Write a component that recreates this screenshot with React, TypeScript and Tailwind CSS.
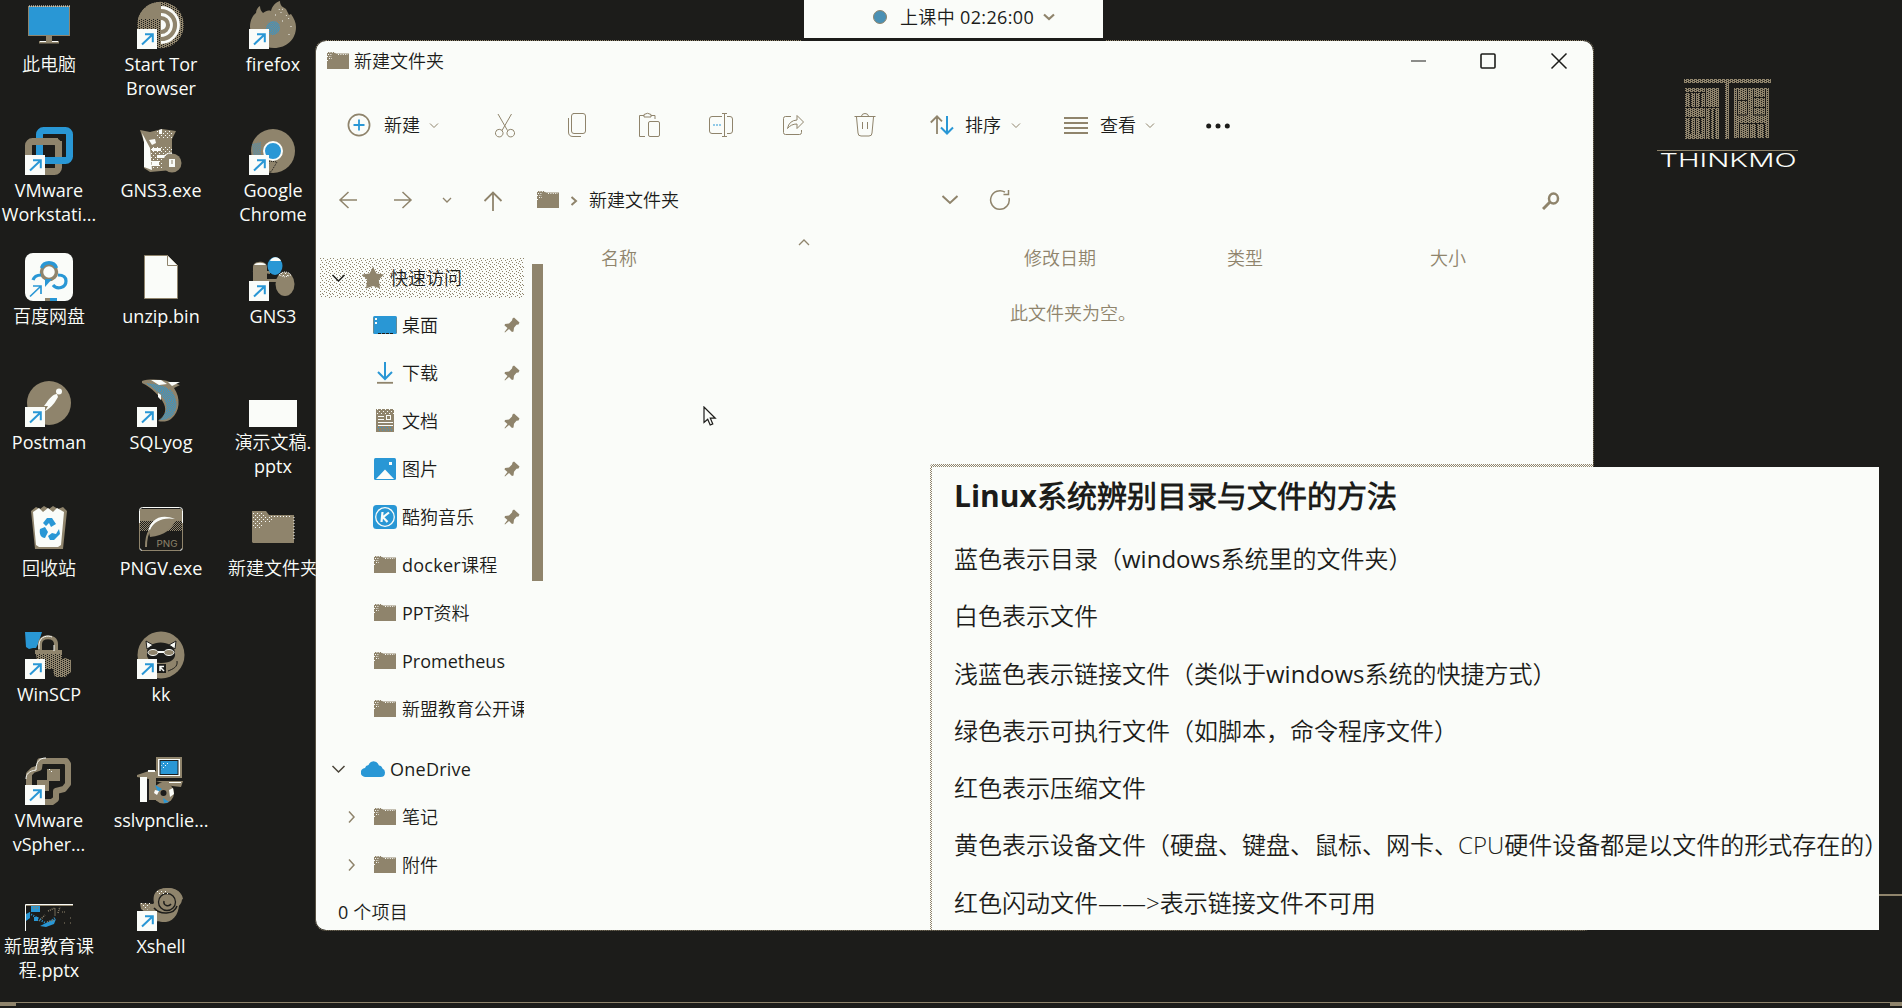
import React from "react";

const TAN = "#8f846c";
const BLUE = "#2997d5";
const WHITE = "#fafcf9";
const DARK = "#1c1c1a";

type Kids = { children?: React.ReactNode };

/* ---------- shared drawings ---------- */

function Defs() {
  return (
    <svg width="0" height="0" className="absolute">
      <defs>
        <pattern id="half" width="2" height="2" patternUnits="userSpaceOnUse">
          <rect width="1" height="1" fill={TAN} />
          <rect x="1" y="1" width="1" height="1" fill={TAN} />
        </pattern>
        <pattern id="most" width="4" height="2" patternUnits="userSpaceOnUse">
          <rect width="4" height="2" fill={TAN} />
          <rect x="0" y="0" width="1" height="1" fill={DARK} />
          <rect x="2" y="1" width="1" height="1" fill={DARK} />
        </pattern>
        <pattern id="lightdots" width="4" height="4" patternUnits="userSpaceOnUse">
          <rect x="0" y="0" width="1" height="1" fill={WHITE} />
          <rect x="2" y="2" width="1" height="1" fill={WHITE} />
        </pattern>
        <pattern id="bluedots" width="2" height="2" patternUnits="userSpaceOnUse">
          <rect x="0" y="0" width="1" height="1" fill={BLUE} />
          <rect x="1" y="1" width="1" height="1" fill={BLUE} />
        </pattern>
        <pattern id="sparse" width="10" height="9" patternUnits="userSpaceOnUse">
          {[[0, 0], [3, 0], [7, 1], [1, 2], [5, 2], [9, 3], [2, 4], [6, 4], [0, 6], [8, 5], [4, 6], [6, 7], [9, 8], [2, 8]].map(
            ([x, y]) => (
              <rect key={`${x}-${y}`} x={x} y={y} width="1" height="1" fill={TAN} />
            )
          )}
        </pattern>
      </defs>
    </svg>
  );
}

function Box({ children }: Kids) {
  return (
    <svg width="48" height="48" viewBox="0 0 48 48" className="shrink-0 overflow-visible">
      {children}
    </svg>
  );
}

function Shortcut() {
  return (
    <g>
      <rect x="0" y="28" width="20" height="20" fill={WHITE} />
      <path d="M5 43.5L15 34M8 33.200h7.800v8" fill="none" stroke={BLUE} strokeWidth="2" />
    </g>
  );
}

/* ---------- desktop icons ---------- */

const PcIcon = () => (
  <Box>
    <rect x="3.5" y="5.5" width="41" height="29" fill={BLUE} stroke={TAN} />
    <path d="M4 5h41" stroke={WHITE} strokeDasharray="1 1" />
    <rect x="21" y="35" width="6" height="6" fill={TAN} />
    <rect x="14" y="40" width="20" height="2.5" fill={TAN} />
    <path d="M15 40.5h6M27 40.5h6" stroke={WHITE} />
  </Box>
);

const TorIcon = () => (
  <Box>
    <circle cx="23.5" cy="24" r="23.3" fill="url(#most)" />
    <path d="M24 1A23 23 0 0 0 1 18h23z" fill={TAN} />
    <path d="M24 5a19 19 0 0 1 0 38z" fill={TAN} />
    <path d="M24 6.500a17.500 17.500 0 0 1 0 35" fill="none" stroke={WHITE} strokeWidth="2.800" />
    <path d="M24 13.500a10.500 10.500 0 0 1 0 21" fill="none" stroke={WHITE} strokeWidth="2.800" />
    <path d="M24 19a5 5 0 0 1 0 10z" fill={WHITE} />
    <Shortcut />
  </Box>
);

const FirefoxIcon = () => (
  <Box>
    <path
      d="M1 26C1 19 4 14 7 12c0-3 2-6 4-7 0 3 1 5 3 7 3-2 5-3 8-2C23 5 27 1 31 0c0 5 3 6 6 8l3 6 2-1c3 4 5 9 5 13 0 12-9 21-22 21C11 47 1 37 1 26z"
      fill={TAN}
    />
    <circle cx="24" cy="27" r="7" fill="url(#bluedots)" />
    <path d="M30 8l2 4 2-5M37 14l3 4M33 20h1M42 25v4M40 33v2M26 14h2" fill="none" stroke={WHITE} strokeDasharray="1 3" />
    <Shortcut />
  </Box>
);

const VmwareIcon = () => (
  <Box>
    <rect x="3.500" y="14.500" width="30" height="30" rx="4" fill="none" stroke={TAN} strokeWidth="7" />
    <rect x="14.500" y="3.500" width="30" height="30" rx="4" fill="none" stroke={BLUE} strokeWidth="7" />
    <path d="M7 14.500h26" stroke={TAN} strokeWidth="7" />
    <path d="M33.500 14v12" stroke={TAN} strokeWidth="7" />
    <Shortcut />
  </Box>
);

const Gns3ExeIcon = () => (
  <Box>
    <path d="M3 3l10 2 12-3 14 2-4 8v31l-22 2-6-4V15z" fill={TAN} />
    <path d="M5 6l8 15 2 22-8-3V15zM12 13l6-1 1 4-4 2zM22 3l3-1v5h-3z" fill={WHITE} />
    <path d="M13 20h22v22H14zM18 3h17v8H20z" fill="url(#lightdots)" />
    <path d="M14 19h22v22H15z" fill="url(#lightdots)" />
    <path d="M15 21h9v3h-9zM20 28h8v3h-8zM15 34h7v5h-7z" fill={WHITE} />
    <circle cx="35" cy="36" r="9.500" fill={TAN} />
    <path d="M32 32h6v8h-6z" fill={WHITE} />
    <path d="M35 33v4" stroke={TAN} />
    <path d="M28 28a10 10 0 0 1 7-2" fill="none" stroke={WHITE} />
  </Box>
);

const ChromeIcon = () => (
  <Box>
    <circle cx="24" cy="24" r="22" fill={TAN} />
    <path d="M3 17l9-2v15l-8-2z" fill="url(#bluedots)" opacity="0.6" />
    <path d="M20 34l8 1-6 10-3-1z" fill="url(#half)" stroke={DARK} strokeDasharray="1 1" />
    <circle cx="24" cy="24" r="9" fill={BLUE} stroke={WHITE} strokeWidth="2" />
    <Shortcut />
  </Box>
);

const BaiduIcon = () => (
  <Box>
    <rect width="48" height="48" rx="8" fill={WHITE} />
    <circle cx="24" cy="19" r="7.500" fill="none" stroke={TAN} strokeWidth="3.500" />
    <path d="M16.500 15a8 8 0 0 1 15 0" fill="none" stroke={BLUE} strokeWidth="3.500" />
    <path d="M8 27c1-3 3-5 8-5M33 22c5 0 8 2 8 6 0 7-9 9-13 4" fill="none" stroke={BLUE} strokeWidth="3.200" />
    <path d="M20 26h7l-7 8z" fill={BLUE} />
    <path d="M5 43.500L15.500 33.500M8 33h8v8" fill="none" stroke={BLUE} strokeWidth="1.700" />
    <path d="M20 46.500h5" stroke={TAN} strokeWidth="3" />
    <path d="M25 46.500h7" stroke={BLUE} strokeWidth="3" />
  </Box>
);

const FileIcon = () => (
  <Box>
    <path d="M7.500 2.500h23l10 10v33h-33z" fill={WHITE} stroke={TAN} />
    <path d="M30.500 2.500v10h10" fill={WHITE} stroke={TAN} />
  </Box>
);

const Gns3Icon = () => (
  <Box>
    <path d="M4 14c0-7 14-7 14 0v14H4z" fill={TAN} />
    <path d="M5 12c2-3 10-3 12 0z" fill={WHITE} />
    <path d="M3 18h18v3M18 26h12v3H18z" fill={TAN} />
    <ellipse cx="26" cy="13" rx="7.500" ry="9" fill={BLUE} />
    <path d="M21 8c2-5 9-5 11 0z" fill={WHITE} />
    <ellipse cx="36" cy="31" rx="9.500" ry="12" fill={TAN} />
    <path d="M30 22c3-4 9-4 12 0l-6 2z" fill="url(#lightdots)" stroke={WHITE} strokeDasharray="1 1" />
    <Shortcut />
  </Box>
);

const PostmanIcon = () => (
  <Box>
    <circle cx="24" cy="24" r="22" fill={TAN} />
    <circle cx="34" cy="12.500" r="3" fill={WHITE} />
    <path d="M32 15c-4 0-8 5-10 8l-3 4h4l-3 5c3-1 8-6 10-9l3-5z" fill={WHITE} />
    <Shortcut />
  </Box>
);

const SqlyogIcon = () => (
  <Box>
    <path d="M5 2c6-2 20-2 28 1l10 3-6 3c7 10 6 24-3 31-4 3-9 3-13 2 6-4 9-10 6-17C24 18 14 8 5 4z" fill={TAN} />
    <path d="M8 4c10 1 22 2 28 10 6 10 4 20-4 25-3 2-7 2-10 2 7-5 9-12 6-19C25 15 16 8 8 4z" fill="url(#bluedots)" />
    <path d="M14 1h10l6 4-8 1zM31 3h12l-8 4zM21 14l3 2v5l-3-3z" fill={WHITE} />
    <Shortcut />
  </Box>
);

const SlideIcon = () => (
  <Box>
    <rect y="21" width="48" height="27" fill={WHITE} />
  </Box>
);

const RecycleIcon = () => (
  <Box>
    <path d="M6 6l5-4 4 2 4-3 5 3 4-3 5 3 5-2 4 4-4 38H10z" fill={TAN} />
    <path d="M8 7l6-4 4 4 5-4 5 4 4-4 7 4-3 33-3 2H14l-3-2z" fill={WHITE} />
    <path d="M18 18l4-5h5l4 6-5 3-2-4-3 3zM15 24l5-2 3 5-3 6c-4 0-6-4-5-9zM34 24l1 5-6 6h-4l-2-4 4-3 4 1z" fill={BLUE} />
  </Box>
);

const PngvIcon = () => (
  <Box>
    <rect x="2.500" y="2.500" width="43" height="43" rx="3" fill={DARK} stroke={WHITE} />
    <path d="M3 4h42v12H3z" fill={TAN} />
    <path d="M3 16h42v10H3z" fill="url(#half)" />
    <path d="M12 27C13 14 24 8 39 13c-2 10-12 18-26 19z" fill={TAN} />
    <path d="M11 27C13 15 23 8 38 14 26 12 17 16 13 25z" fill={WHITE} />
    <path d="M9 42c0-7 1-13 4-17" fill="none" stroke={TAN} strokeWidth="2" />
    <text x="19.500" y="41.500" textLength="21" lengthAdjust="spacingAndGlyphs" fontSize="8.500" fontFamily="Inter, sans-serif" fill={TAN}>
      PNG
    </text>
    <path d="M5 45.500h38M45.500 18v26M2.500 18v26" stroke={TAN} />
  </Box>
);

const BigFolderIcon = () => (
  <Box>
    <path d="M3 6h14l3 4h25v28H4l-1-1z" fill={TAN} />
    <path d="M4 7h12v5H4zM4 12h20v5H4zM4 17h9v6H4z" fill="url(#lightdots)" />
    <path d="M45 12v22M22 11.500h20" stroke={WHITE} strokeDasharray="1 2" />
  </Box>
);

const WinscpIcon = () => (
  <Box>
    <path d="M0 1h17l-4 12-2 4H8l-4 1-3-2z" fill={BLUE} />
    <path d="M10 19h27v19H14z" fill="url(#most)" />
    <path d="M10 19h27v4H10z" fill={TAN} />
    <path d="M15 19v-6c0-9 16-9 16 0v7" fill="none" stroke={TAN} strokeWidth="4" />
    <path d="M14 18v-5c1-8 9-9 13-7M29 14v6" fill="none" stroke={WHITE} />
    <path d="M28 40l8-11 4-2 6 2v12l-6 5H30z" fill="url(#most)" />
    <Shortcut />
  </Box>
);

const KkIcon = () => (
  <Box>
    <circle cx="24" cy="24" r="23.500" fill={TAN} />
    <path d="M10 22c-1-14 28-14 28 0 1 6-4 10-14 10S9 28 10 22z" fill={DARK} />
    <path d="M10 18l-1-8 7 4zM38 18l1-8-7 4z" fill={WHITE} stroke={DARK} />
    <ellipse cx="16" cy="21.500" rx="5" ry="3" fill={TAN} stroke={WHITE} />
    <ellipse cx="32" cy="21.500" rx="5" ry="3" fill={TAN} stroke={WHITE} />
    <path d="M21 21h6" stroke={WHITE} strokeWidth="2" />
    <rect x="20" y="33" width="9" height="9" fill={DARK} />
    <path d="M23 36l4 4M23 40v-4.500h4" fill="none" stroke={WHITE} strokeWidth="1.500" />
    <path d="M40 30c1 6-4 8-9 10" fill="none" stroke={DARK} />
    <Shortcut />
  </Box>
);

const VsphereIcon = () => (
  <Box>
    <path d="M15 4h26l2 3v20l-4 5-8 2v8l-4 3H4V17l4-4 6-2z" fill="none" stroke={TAN} strokeWidth="6" strokeLinejoin="round" />
    <path d="M1 22c0-5 3-8 10-9 0-9 4-12 10-12" fill="none" stroke={WHITE} />
    <path d="M22 12h13v12H24v10H12V23h10z" fill={TAN} />
    <path d="M23 12h5v4h-5z" fill="url(#lightdots)" />
    <Shortcut />
  </Box>
);

const SslvpnIcon = () => (
  <Box>
    <path d="M0 18l12-4h7v29h-7V22L0 20z" fill={TAN} />
    <rect x="3" y="20" width="7" height="25" fill={WHITE} />
    <path d="M11 14h7" stroke={WHITE} strokeWidth="2" />
    <rect x="19" y="0" width="26" height="21" fill={TAN} />
    <rect x="21" y="2" width="22" height="17" fill={WHITE} />
    <rect x="23" y="3.500" width="18" height="14" fill={BLUE} stroke={DARK} />
    <path d="M24 5h9l-8 9z" fill="url(#lightdots)" />
    <path d="M19 24h27l-2 6-9-1z" fill={TAN} />
    <path d="M32 25.500h12" stroke={WHITE} />
    <circle cx="26.500" cy="36" r="10.500" fill={TAN} />
    <path d="M18 28l7 4-4 3zM26 41l6 4-5 1z" fill={BLUE} />
    <path d="M32 33l4-2 1 6-4 3zM18 33l4 1-2 4-3-2zM22 41l3 3" fill={WHITE} />
    <circle cx="26.500" cy="36" r="3" fill={DARK} />
  </Box>
);

const PosterIcon = () => (
  <Box>
    <path d="M.5 48V21.500H48" fill="none" stroke={WHITE} />
    <path d="M1 22.500h47" stroke={TAN} />
    <path d="M6 23h9v6H6zM1 31l4-2v6l-4 3zM9 34h4v4H9zM15 43l6-3 10-4-2 5-8 3z" fill={BLUE} />
    <path d="M8 25h5M14 38l6-6M22 39l8-2M23 28l7-3v8M33 30l2-6" fill="none" stroke={TAN} strokeDasharray="1 1" strokeWidth="1.500" />
    <path d="M4 30l10 6 8 5 9-7" fill="none" stroke={BLUE} strokeDasharray="1 1.500" strokeWidth="2" />
    <path d="M37 29h3M39 40h2M45 35h2M45 40h2" stroke={TAN} strokeDasharray="1 1" />
  </Box>
);

const XshellIcon = () => (
  <Box>
    <path d="M17 20C15 8 22 5 31 5c9 0 14 5 15 11l-4 2c1 10-4 20-13 21-5 0-10 0-12-3l-13-10-1-6 13 1z" fill={TAN} />
    <ellipse cx="31" cy="16" rx="14" ry="11" fill={TAN} />
    <circle cx="30" cy="19" r="8.500" fill="none" stroke={DARK} strokeWidth="1.300" />
    <path d="M27 18c-1 5 5 6 7 3" fill="none" stroke={DARK} strokeWidth="1.500" />
    <path d="M17 25c6 7 20 7 23-2" fill="none" stroke={DARK} strokeWidth="1.500" />
    <path d="M20 7h11v5H19zM3 20h13l-6 7H7z" fill="url(#lightdots)" />
    <Shortcut />
  </Box>
);

type Item = { icon: () => React.ReactElement; lines: string[] };

const COLUMNS: Item[][] = [
  [
    { icon: PcIcon, lines: ["此电脑"] },
    { icon: VmwareIcon, lines: ["VMware", "Workstati..."] },
    { icon: BaiduIcon, lines: ["百度网盘"] },
    { icon: PostmanIcon, lines: ["Postman"] },
    { icon: RecycleIcon, lines: ["回收站"] },
    { icon: WinscpIcon, lines: ["WinSCP"] },
    { icon: VsphereIcon, lines: ["VMware", "vSpher..."] },
    { icon: PosterIcon, lines: ["新盟教育课", "程.pptx"] },
  ],
  [
    { icon: TorIcon, lines: ["Start Tor", "Browser"] },
    { icon: Gns3ExeIcon, lines: ["GNS3.exe"] },
    { icon: FileIcon, lines: ["unzip.bin"] },
    { icon: SqlyogIcon, lines: ["SQLyog"] },
    { icon: PngvIcon, lines: ["PNGV.exe"] },
    { icon: KkIcon, lines: ["kk"] },
    { icon: SslvpnIcon, lines: ["sslvpnclie..."] },
    { icon: XshellIcon, lines: ["Xshell"] },
  ],
  [
    { icon: FirefoxIcon, lines: ["firefox"] },
    { icon: ChromeIcon, lines: ["Google", "Chrome"] },
    { icon: Gns3Icon, lines: ["GNS3"] },
    { icon: SlideIcon, lines: ["演示文稿.", "pptx"] },
    { icon: BigFolderIcon, lines: ["新建文件夹"] },
  ],
];

function Desktop() {
  return (
    <div className="-ml-[7px] flex pt-px text-[#fafcf9]">
      {COLUMNS.map((col, i) => (
        <div key={i} className="flex w-28 flex-col">
          {col.map((it, j) => (
            <div key={j} className="flex h-[126px] flex-col items-center">
              <it.icon />
              <div className="mt-[3px] text-center whitespace-nowrap">
                {it.lines.map((l) => (
                  <div key={l} className="h-6 leading-6">
                    {l}
                  </div>
                ))}
              </div>
            </div>
          ))}
        </div>
      ))}
    </div>
  );
}

/* ---------- window icons ---------- */

function Folder({ className = "" }: { className?: string }) {
  return (
    <svg width="24" height="24" viewBox="0 0 24 24" className={`shrink-0 ${className}`}>
      <path d="M1 3h7l2 1.500h13V20H1z" fill={TAN} />
      <path d="M1 3.500h8M2 5.500h4M1 7.500h5M3 9.500h3M1 11.500h2M12 5.500h10" stroke={WHITE} strokeDasharray="1 1.400" />
    </svg>
  );
}

type StrokeProps = { w: number; h: number; d: string; sw?: number; color?: string; className?: string };
function Line({ w, h, d, sw = 1, color = TAN, className = "" }: StrokeProps) {
  return (
    <svg width={w} height={h} viewBox={`0 0 ${w} ${h}`} className={`shrink-0 overflow-visible ${className}`}>
      <path d={d} fill="none" stroke={color} strokeWidth={sw} />
    </svg>
  );
}

const SmallChevron = ({ className = "" }: { className?: string }) => (
  <Line w={10} h={10} d="M1 3.500l4 4 4-4" className={className} />
);

function Toolbar() {
  return (
    <div className="flex h-[87px] items-center pl-[31px]">
      <svg width="24" height="24" viewBox="0 0 24 24" className="shrink-0">
        <circle cx="12" cy="12" r="10.600" fill="none" stroke={TAN} strokeWidth="1.700" />
        <path d="M12 6.500v11M6.500 12h11" stroke={BLUE} strokeWidth="1.800" />
      </svg>
      <span className="ml-[13px] w-9">新建</span>
      <SmallChevron className="ml-[9px]" />
      <Line
        w={24}
        h={24}
        d="M5 1l9.500 16.500M18.500 1L9 17.500M10 19.500a3.800 3.800 0 1 1-7.500 0a3.800 3.800 0 0 1 7.500 0M21.500 19.500a3.800 3.800 0 1 1-7.500 0a3.800 3.800 0 0 1 7.500 0"
        className="ml-[54px]"
      />
      <Line
        w={24}
        h={24}
        d="M8 .5h10q2.500 0 2.500 2.500v15q0 2.500-2.500 2.500H9Q6.500 20.500 6.500 18V3Q6.500.5 9 .5M3.500 5v14q0 4.500 4.500 4.500h8"
        className="ml-[48px]"
      />
      <Line
        w={24}
        h={24}
        d="M8 23.500H2.500v-21H7M14 2.500h4V6M7 1.500Q10.500-1 14 1.500V4H7zM13 8.500h8q1.500 0 1.500 1.500v12q0 1.500-1.500 1.500h-8q-1.500 0-1.500-1.500V10q0-1.500 1.500-1.500"
        className="ml-[48px]"
      />
      <svg width="24" height="24" viewBox="0 0 24 24" className="ml-[48px] shrink-0 overflow-visible">
        <path
          d="M13 3.500H3Q.5 3.500.5 6v12q0 2.500 2.500 2.500h10M18 3.500h3q2.500 0 2.500 2.500v12q0 2.500-2.500 2.500h-3M15.500.5v23M13 .5h5M13 23.500h5"
          fill="none"
          stroke={TAN}
        />
        <path d="M4 12h9" stroke={BLUE} strokeDasharray="2 1" />
      </svg>
      <Line
        w={24}
        h={24}
        d="M10 3.500H4.500Q2.500 3.500 2.500 5.500v14q0 2 2 2h14q2 0 2-2V17M6.500 15.500Q8 7.500 16 7V2.500l6.500 6.500-6.500 6.500v-4.500Q10 11 6.500 15.500"
        className="ml-[48px]"
      />
      <Line
        w={24}
        h={24}
        d="M1.500 3.500h21M8.500 3Q9 .5 12 .5T15.500 3M3.500 4l1.500 16q0 3 3 3h8q3 0 3-3L20.500 4M9.500 9v7M14.500 9v7"
        className="ml-[48px]"
      />
      <svg width="24" height="24" viewBox="0 0 24 24" className="ml-[53px] shrink-0">
        <path d="M7 21V3.500M.8 9.500L7 3.300l5 5" fill="none" stroke={TAN} strokeWidth="1.800" />
        <path d="M17 3v17M11 14.500l6 6 6-6" fill="none" stroke={BLUE} strokeWidth="2" />
      </svg>
      <span className="ml-[11px] w-9">排序</span>
      <SmallChevron className="ml-[10px]" />
      <Line w={24} h={24} d="M0 5h24M0 10h24M0 15h24M0 20h24" sw={2} className="ml-[43px]" />
      <span className="ml-3 w-9">查看</span>
      <SmallChevron className="ml-[9px]" />
      <svg width="24" height="6" viewBox="0 0 24 6" className="mt-[3px] ml-[51px] shrink-0">
        <circle cx="2.700" cy="3" r="2.500" fill={DARK} />
        <circle cx="12" cy="3" r="2.500" fill={DARK} />
        <circle cx="21.300" cy="3" r="2.500" fill={DARK} />
      </svg>
    </div>
  );
}

function NavBar() {
  return (
    <div className="flex h-16 items-center">
      <Line w={18} h={18} d="M9.500 1L1 9l8.500 8M1 9h17" sw={1.500} className="ml-[23px]" />
      <Line w={18} h={18} d="M8.500 1L17 9l-8.500 8M0 9h17" sw={1.500} className="ml-[37px]" />
      <Line w={10} h={10} d="M1 3l4 4 4-4" sw={1.300} className="ml-[30px]" />
      <Line w={18} h={20} d="M9 20V2M.5 10L9 1.500l8.500 8.500" sw={1.800} className="mt-[2px] ml-[32px]" />
      <Folder className="ml-[34px]" />
      <Line w={8} h={10} d="M1.500 1l4.500 4-4.500 4" sw={2} className="mt-[2px] ml-[10px]" />
      <span className="ml-[11px]">新建文件夹</span>
      <Line w={16} h={10} d="M.5 1L8 8l7.500-7" sw={2} className="ml-[263px]" />
      <svg width="22" height="22" viewBox="0 0 22 22" className="ml-[31px] shrink-0">
        <path d="M16 3.200A9.300 9.300 0 1 0 20 9" fill="none" stroke={TAN} strokeWidth="1.500" />
        <path d="M19.500 1v4.500H14.500" fill="none" stroke={TAN} strokeWidth="1.500" />
      </svg>
      <svg width="18" height="18" viewBox="0 0 18 18" className="mt-px ml-[531px] shrink-0">
        <ellipse cx="11.500" cy="6.500" rx="4.500" ry="5" fill="none" stroke={TAN} strokeWidth="2.500" />
        <path d="M8 10L1 17" stroke={TAN} strokeWidth="3" />
      </svg>
    </div>
  );
}

const Pin = () => (
  <svg width="16" height="16" viewBox="0 0 16 16" className="ml-auto mr-[4px] shrink-0">
    <path d="M10 .5l5.500 5-1 2-2 .3-2.500 3-.5 3.700-1.500.5-3-3L1 15.500.5 15l3-4-3-2.500.5-1.500 4-.5 3-3 .5-2z" fill={TAN} />
  </svg>
);

const DesktopGlyph = () => (
  <svg width="24" height="24" viewBox="0 0 24 24" className="shrink-0">
    <rect x="0" y="3" width="24" height="18" rx="1.500" fill={BLUE} />
    <path d="M2 6h2M2 10h2" stroke={WHITE} strokeWidth="2" />
    <path d="M.5 5v15M23.500 5v15" stroke={TAN} opacity=".6" />
    <path d="M5 20.500h15" stroke={DARK} strokeDasharray="3 1" />
  </svg>
);
const DownloadGlyph = () => (
  <svg width="24" height="24" viewBox="0 0 24 24" className="shrink-0">
    <path d="M12 1v16M5 11l7 7 7-7" fill="none" stroke={BLUE} strokeWidth="2" />
    <path d="M4 21.800h16" stroke={TAN} strokeWidth="1.800" />
  </svg>
);
const DocGlyph = () => (
  <svg width="24" height="24" viewBox="0 0 24 24" className="shrink-0">
    <rect x="3" y="0" width="18" height="23" fill={TAN} />
    <rect x="3" y="0" width="18" height="5" fill="url(#lightdots)" />
    <path d="M5 7.500h6M5 10.500h6M5 13.500h15M5 16.500h15" stroke={WHITE} />
    <rect x="13.500" y="6.500" width="4" height="4" fill={TAN} stroke={WHITE} />
    <path d="M5 18.500h14M6 21h13" stroke={BLUE} strokeDasharray="1 2" />
  </svg>
);
const PictureGlyph = () => (
  <svg width="24" height="24" viewBox="0 0 24 24" className="shrink-0">
    <rect x="1" y="1" width="22" height="22" rx="1.500" fill={BLUE} />
    <rect x="16" y="5" width="3" height="3" fill={WHITE} />
    <path d="M3 22l9-9.500L21 22z" fill={WHITE} />
  </svg>
);
const KugouGlyph = () => (
  <svg width="24" height="24" viewBox="0 0 24 24" className="shrink-0">
    <rect width="24" height="24" rx="3.500" fill={BLUE} />
    <circle cx="12" cy="12" r="9.300" fill="none" stroke={WHITE} strokeWidth="1.300" />
    <path d="M9.500 7l-1 10M16 7.500l-6 4.700 4.500 4.800" fill="none" stroke={WHITE} strokeWidth="2.200" />
  </svg>
);

const QUICK: { glyph: React.ReactElement; name: string; pin?: boolean; track?: string }[] = [
  { glyph: <DesktopGlyph />, name: "桌面", pin: true },
  { glyph: <DownloadGlyph />, name: "下载", pin: true },
  { glyph: <DocGlyph />, name: "文档", pin: true },
  { glyph: <PictureGlyph />, name: "图片", pin: true },
  { glyph: <KugouGlyph />, name: "酷狗音乐", pin: true },
  { glyph: <Folder />, name: "docker课程", track: "tracking-[0.25px]" },
  { glyph: <Folder />, name: "PPT资料" },
  { glyph: <Folder />, name: "Prometheus" },
  { glyph: <Folder />, name: "新盟教育公开课" },
];

function Sidebar() {
  return (
    <div className="flex w-[227px] shrink-0 pl-1 pt-[26px]">
      <div className="flex w-[204px] flex-col">
        <div className="relative flex h-10 items-center pl-3">
          <svg width="204" height="40" className="absolute top-0 left-0">
            <rect width="204" height="40" fill="url(#sparse)" />
          </svg>
          <Line w={13} h={8} d="M.5 1l6 6 6-6" sw={1.500} color={DARK} className="relative" />
          <svg width="22" height="22" viewBox="0 0 22 22" className="relative ml-[17px] shrink-0">
            <path d="M11 0l3.500 6.500L22 7.500l-5.200 5.300 1.200 8.700-7-2.500-7 2.500 1.200-8.700L0 7.500l7.500-1z" fill={TAN} />
          </svg>
          <span className="relative ml-[6px]">快速访问</span>
        </div>
        <div className="mt-[3px] flex flex-col">
          {QUICK.map((q) => (
            <div key={q.name} className="flex h-12 items-center overflow-hidden pl-[53px]">
              {q.glyph}
              <span className={`ml-[5px] whitespace-nowrap ${q.track ?? ""}`}>{q.name}</span>
              {q.pin && <Pin />}
            </div>
          ))}
        </div>
        <div className="mt-[12px] flex h-12 items-center pl-3">
          <Line w={13} h={8} d="M.5 1l6 6 6-6" sw={1.500} color="#4a453a" />
          <svg width="24" height="16" viewBox="0 0 24 16" className="ml-[16px] shrink-0">
            <path d="M4.500 16A4.500 4.500 0 0 1 4 7Q4.500 4.500 7.500 4 9 .3 12.500.3q4 0 5.500 4.200 2.500 0 3.500 3Q24 8.500 24 11.500q0 4.500-4.500 4.500z" fill={BLUE} />
          </svg>
          <span className="ml-[5px] tracking-[0.25px]">OneDrive</span>
        </div>
        {["笔记", "附件"].map((n) => (
          <div key={n} className="flex h-12 items-center pl-[28px]">
            <Line w={7} h={12} d="M1 .5L6 6l-5 5.500" sw={1.500} />
            <Folder className="ml-[18px]" />
            <span className="ml-[5px]">{n}</span>
          </div>
        ))}
      </div>
      <div className="mt-[6px] ml-2 h-[317px] w-[11px] bg-[#8f846c]" />
    </div>
  );
}

function ExplorerWindow() {
  return (
    <div className="absolute top-[40px] left-[315px] flex h-[891px] w-[1279px] flex-col overflow-hidden rounded-[11px] border border-dotted border-[#8f846c] bg-[#fafcf9] bg-clip-padding text-[#1c1c1a]">
      <div className="flex h-10 shrink-0 items-center pl-[10px]">
        <Folder />
        <span className="ml-[4px]">新建文件夹</span>
        <Line w={16} h={2} d="M0 1h15" color={DARK} className="ml-auto" />
        <svg width="16" height="16" viewBox="0 0 16 16" className="ml-[53px]">
          <rect x="1" y="1" width="14" height="14" rx="1" fill="none" stroke={DARK} strokeWidth="1.600" />
        </svg>
        <Line w={16} h={16} d="M.5.5l15 15M15.500.5l-15 15" sw={1.500} color={DARK} className="mr-[26px] ml-[55px]" />
      </div>
      <Toolbar />
      <NavBar />
      <div className="flex h-[657px] shrink-0">
        <Sidebar />
        <div className="flex flex-col text-[#8f846c]">
          <div className="flex h-[52px] items-center">
            <span className="ml-[58px] w-9">名称</span>
            <Line w={12} h={8} d="M1 7l5-5 5 5" sw={1.300} className="mt-[6px] ml-[161px] self-start" />
            <span className="ml-[214px] w-[72px] whitespace-nowrap">修改日期</span>
            <span className="ml-[131px] w-9">类型</span>
            <span className="ml-[167px] w-9">大小</span>
          </div>
          <div className="flex h-[58px] items-center pl-[467px]">此文件夹为空。</div>
        </div>
      </div>
      <div className="flex h-[41px] items-center pt-[4px] pl-[22px] tracking-[0.2px]">0 个项目</div>
    </div>
  );
}

const NOTES = [
  "蓝色表示目录（windows系统里的文件夹）",
  "白色表示文件",
  "浅蓝色表示链接文件（类似于windows系统的快捷方式）",
  "绿色表示可执行文件（如脚本，命令程序文件）",
  "红色表示压缩文件",
  "黄色表示设备文件（硬盘、键盘、鼠标、网卡、CPU硬件设备都是以文件的形式存在的）",
  "红色闪动文件——>表示链接文件不可用",
];

function Note({ text }: { text: string }) {
  return (
    <div className="h-[57.3px] leading-[57px] whitespace-nowrap">
      {text.split(/(windows)/).map((part, i) =>
        part === "windows" ? (
          <span key={i} className="font-normal">
            {part}
          </span>
        ) : (
          <React.Fragment key={i}>{part}</React.Fragment>
        )
      )}
    </div>
  );
}

function NotesPanel() {
  return (
    <div className="absolute top-[464px] left-[930px] flex h-[466px] w-[949px] flex-col overflow-hidden text-[#1c1c1a]">
      <div className="h-[3px] w-[663px] shrink-0 rounded-tl-[6px] bg-[repeating-conic-gradient(#8f846c_0_25%,#fafcf9_0_50%)] bg-[length:2px_2px]" />
      <div className="flex h-[463px]">
        <div className="w-[2px] shrink-0 bg-[repeating-conic-gradient(#8f846c_0_25%,#fafcf9_0_50%)] bg-[length:2px_2px]" />
        <div className="flex grow flex-col bg-[#fafcf9] pl-[22px]">
          <div className="mt-[9px] h-10 shrink-0 text-[30px] leading-10 font-bold whitespace-nowrap">Linux系统辨别目录与文件的方法</div>
          <div className="mt-[14px] flex shrink-0 flex-col text-2xl font-light">
            {NOTES.map((n) => (
              <Note key={n} text={n} />
            ))}
          </div>
        </div>
      </div>
    </div>
  );
}

function Brand() {
  return (
    <svg width="142" height="96" viewBox="0 0 142 96" className="absolute top-[79px] left-[1657px] overflow-visible">
      <rect x="27" y="0" width="87" height="4" fill="url(#most)" />
      <rect x="68" y="4" width="4" height="56" fill="url(#most)" />
      <rect x="28" y="9" width="34" height="51" fill="url(#most)" />
      <rect x="77" y="9" width="35" height="50" fill="url(#most)" />
      <path
        d="M28 13.500h20M28 28.500h34M28 38.500h20M48.500 9v51M33.500 14v14M38.500 14v14M43.500 14v14M33.500 39v16M38.500 39v16M43.500 39v16M53.500 30v30M57.500 30v30"
        fill="none"
        stroke={DARK}
      />
      <path
        d="M80.500 10v26h10V10M80 21.500h10M96.500 10v26h12V10M96 18.500h12M96 28.500h12M82.500 59V44.500h25V59M92.500 45v14M99.500 45v14"
        fill="none"
        stroke={DARK}
      />
      <path d="M0 71.500h141" stroke={TAN} />
      <text
        x="2.500"
        y="87.800"
        fill={WHITE}
        fontFamily="Inter, sans-serif"
        fontWeight="300"
        fontSize="19"
        textLength="137"
        lengthAdjust="spacingAndGlyphs"
      >
        THINKMO
      </text>
    </svg>
  );
}

export default function App() {
  return (
    <div className="relative h-[1008px] w-[1902px] overflow-hidden bg-[#1c1c1a] font-['Open_Sans','Noto_Sans_CJK_SC_DemiLight','Noto_Sans_CJK_SC',sans-serif] text-[18px] leading-6">
      <Defs />
      <Desktop />
      <Brand />
      <div className="absolute top-[894px] left-[1879px] h-[2px] w-[23px] bg-[#8f846c]" />
      <ExplorerWindow />
      <div className="absolute top-0 left-[801px] flex w-[305px] justify-center bg-[#1c1c1a] px-[3px] pb-[3px]">
        <div className="flex h-[38px] w-full items-center bg-[#fafcf9] pb-[5px] pl-[69px] text-[#1c1c1a]">
          <span className="h-[14px] w-[14px] rounded-full border border-[#8f846c] bg-[#4a90b4]" />
          <span className="ml-[13px] tracking-[0.35px] whitespace-nowrap">上课中 02:26:00</span>
          <Line w={12} h={8} d="M1 1.500l5 4.500 5-4.500" sw={2.200} className="ml-[9px]" />
        </div>
      </div>
      <NotesPanel />
      <svg width="14" height="20" viewBox="0 0 14 20" className="absolute top-[406px] left-[703px]">
        <path d="M1 1v15.500l3.700-3.300L7.200 19l2.600-1.100-2.500-5.700h5z" fill={WHITE} stroke={DARK} strokeWidth="1.200" />
      </svg>
      <div className="absolute top-[1002px] left-0 flex h-[6px] w-full justify-between border-t border-[#8f846c]">
        <div className="h-[3px] w-4 bg-[#8f846c]" />
        <div className="h-[3px] w-3 bg-[#8f846c]" />
      </div>
    </div>
  );
}
